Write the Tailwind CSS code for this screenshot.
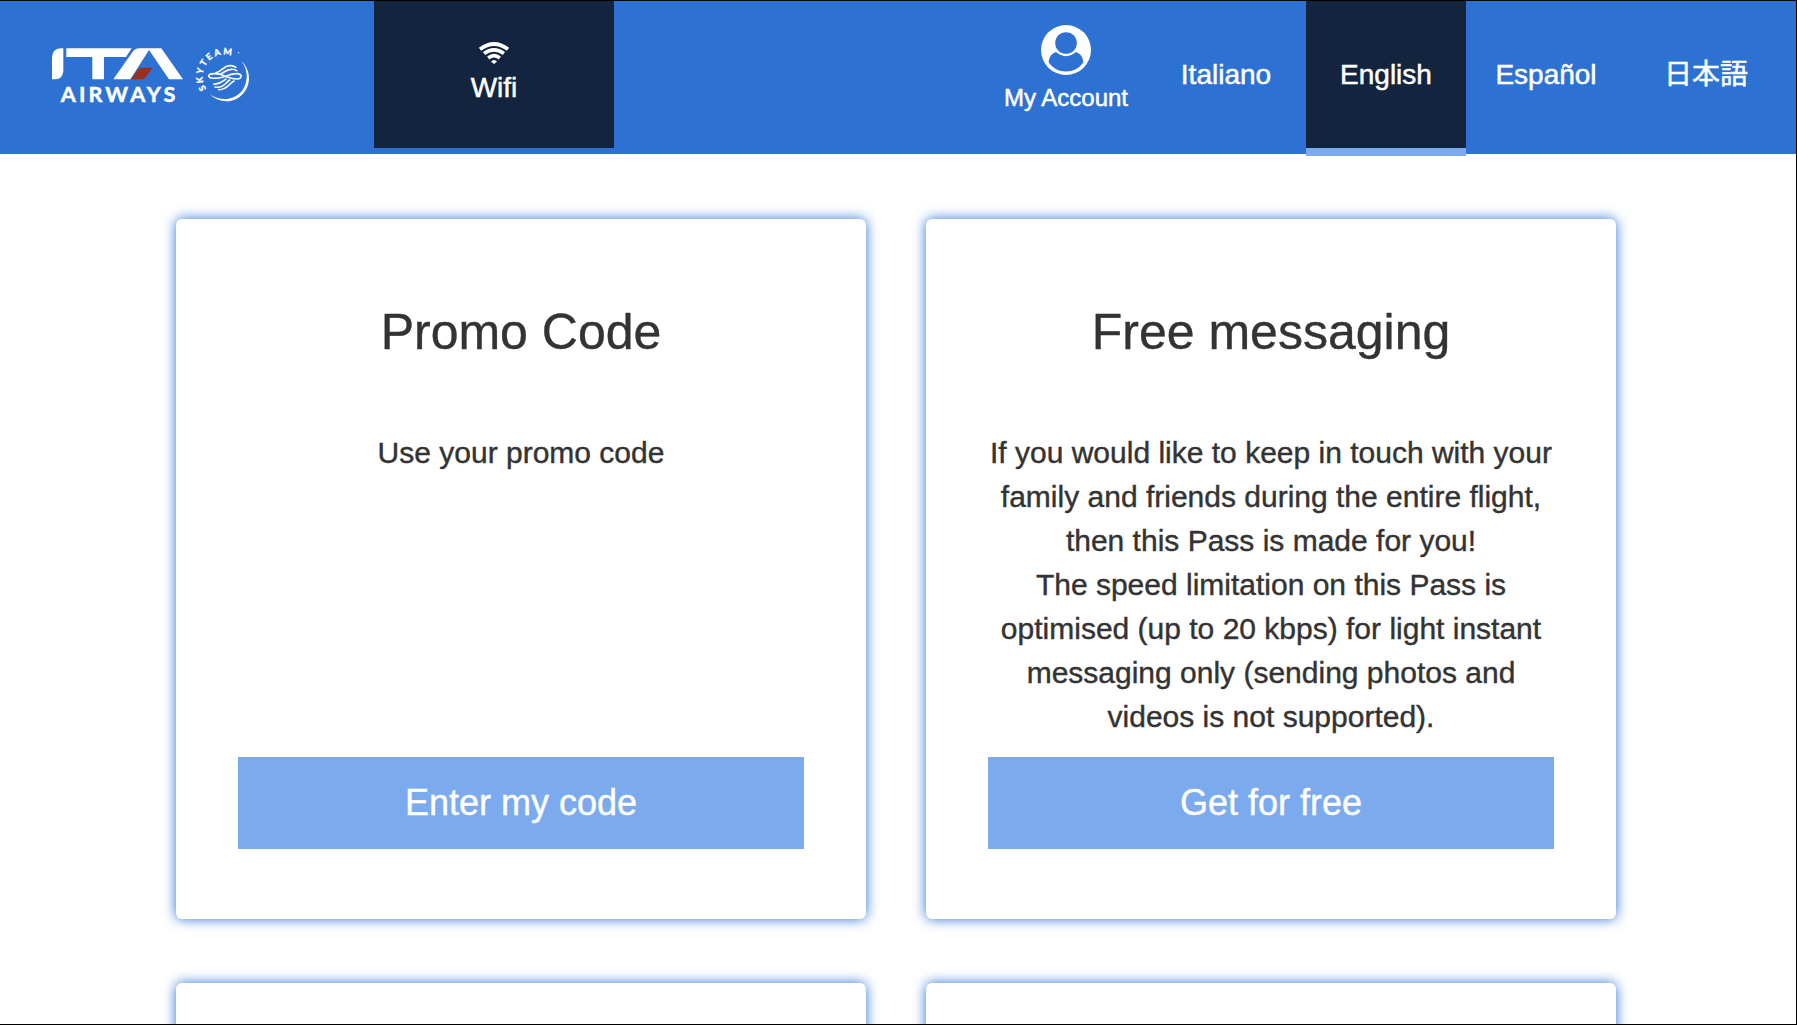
<!DOCTYPE html>
<html lang="en">
<head>
    <meta charset="UTF-8">
    <meta name="viewport" content="width=device-width, initial-scale=1.0">
    <title>ITA Airways - Wifi</title>
    <script src="https://cdn.jsdelivr.net/npm/@tailwindcss/browser@4"></script>
</head>
<body class="h-screen overflow-hidden bg-white font-['Liberation_Sans','Noto_Sans_CJK_JP',sans-serif] text-[#333333]">
    <div class="h-[1025px] overflow-hidden border-t border-r border-b border-black">
        <!-- Header -->
        <header class="flex h-[153px] bg-[#2d71d3] pr-[10px] text-[28px] text-white">
            <a href="#" class="flex w-[374px] shrink-0 pt-[29px] pl-[30px]">
                <svg class="h-[90px] w-[240px]" viewBox="0 0 720 270" fill="none">
                    <!-- ITA -->
                    <path fill="#fff" d="M66 148V82Q67 56 92 55H100V122Q99 147 76 148Z"/>
                    <path fill="#fff" d="M109 55H305L288 81H222V148H187V81H109Z"/>
                    <path fill="#fff" d="M250 148L309 64Q316 55 328 55H394L459 148H417L357 60L301 148Z"/>
                    <path fill="#97301f" d="M303 148L324 119Q328 113 336 113H367L346 143Q342 148 335 148Z"/>
                    <text x="92" y="216" textLength="344" fill="#fff" stroke="#fff" stroke-width="1.5" font-family="Lato, sans-serif" font-weight="700" font-size="65">AIRWAYS</text>
                    <!-- SkyTeam -->
                    <path id="ring" d="M529 177A66 66 0 0 1 617 83"/>
                    <text fill="#fff" stroke="#fff" stroke-width="0.8" font-family="Lato, sans-serif" font-weight="900" font-size="27"><textPath href="#ring" textLength="164">SKYTEAM</textPath></text>
                    <circle cx="626" cy="68" r="2" fill="#fff"/>
                    <path fill="#fff" d="M634 93C659 116 665 153 646 182C621 220 572 224 539 193C570 214 613 213 638 180C656 152 654 118 634 93Z"/>
                    <g stroke="#fff" stroke-width="4.8" stroke-linecap="round">
                        <path d="M582 137C566 130 540 128 536 137C534 147 562 146 577 142C594 137 604 130 622 131C638 133 636 146 622 147C606 148 596 142 582 137Z"/>
                        <path d="M558 128C576 124 580 108 598 107C608 106 614 109 618 112"/>
                        <path d="M573 131C584 127 588 119 602 118C610 117 616 119 620 122"/>
                        <path d="M551 162C570 165 578 153 588 147"/>
                        <path d="M555 171C580 175 586 159 599 150"/>
                        <path d="M566 179C592 180 596 161 612 153"/>
                    </g>
                </svg>
            </a>
            <a href="#" class="flex h-[147px] w-[240px] shrink-0 flex-col items-center bg-[#13243e] pt-[41px]">
                <svg class="h-[22px] w-[32px]" viewBox="0 0 32 22" fill="none" stroke="#fff" stroke-width="3.8">
                    <path d="M2 7.2Q16 -3.2 30 7.2"/>
                    <path d="M6.1 11.6Q16 4.2 25.9 11.6"/>
                    <path d="M10.2 15.9Q16 11.4 21.8 15.9"/>
                    <path fill="#fff" stroke="none" d="M13 19.6Q16 16.6 19 19.6L16.5 21.8H15.5Z"/>
                </svg>
                <span class="mt-[4px] leading-[40px] [-webkit-text-stroke:0.5px]">Wifi</span>
            </a>
            <nav class="ml-auto flex [-webkit-text-stroke:0.5px]">
                <a href="#" class="flex w-[160px] flex-col items-center pt-[24px] text-2xl">
                    <svg class="size-[50px]" viewBox="0 0 50 50">
                        <circle cx="25" cy="25" r="25" fill="#fff"/>
                        <circle cx="25" cy="18" r="10.8" fill="#2d71d3"/>
                        <path fill="#2d71d3" d="M15 27C10.5 28.5 8 32 7.7 37.5C12 43.5 18 46.5 25 46.5S38 43.5 42.3 37.5C42 32 39.5 28.5 35 27C29 32.5 21 32.5 15 27Z"/>
                    </svg>
                    <span class="mt-[7px] leading-8">My Account</span>
                </a>
                <a href="#" class="flex h-[147px] w-[160px] items-center justify-center">Italiano</a>
                <a href="#" class="box-content flex h-[147px] w-[160px] items-center justify-center border-b-8 border-[#7babee] bg-[#13243e]">English</a>
                <a href="#" class="flex h-[147px] w-[160px] items-center justify-center">Español</a>
                <a href="#" class="flex h-[147px] w-[160px] items-center justify-center">日本語</a>
            </nav>
        </header>

        <!-- Passes -->
        <main class="grid grid-cols-[690px_690px] gap-x-[60px] gap-y-16 pt-[65px] pl-[176px] text-center [-webkit-text-stroke:0.4px]">
            <section class="flex h-[700px] flex-col rounded-md px-[62px] pt-[78px] pb-[70px] shadow-[0_0_13px_#2d71d3]">
                <h2 class="text-[50px] leading-[70px]">Promo Code</h2>
                <p class="mt-[64px] text-[30px] leading-[44px]">Use your promo code</p>
                <button class="mt-auto h-[92px] bg-[#7babee] text-4xl text-white">Enter my code</button>
            </section>
            <section class="flex h-[700px] flex-col rounded-md px-[62px] pt-[78px] pb-[70px] shadow-[0_0_13px_#2d71d3]">
                <h2 class="text-[50px] leading-[70px]">Free messaging</h2>
                <p class="mt-[64px] text-[30px] leading-[44px]">If you would like to keep in touch with your family and friends during the entire flight, then this Pass is made for you!<br>The speed limitation on this Pass is optimised (up to 20 kbps) for light instant messaging only (sending photos and videos is not supported).</p>
                <button class="mt-auto h-[92px] bg-[#7babee] text-4xl text-white">Get for free</button>
            </section>
            <section class="h-[700px] rounded-md shadow-[0_0_13px_#2d71d3]"></section>
            <section class="h-[700px] rounded-md shadow-[0_0_13px_#2d71d3]"></section>
        </main>
    </div>
</body>
</html>
